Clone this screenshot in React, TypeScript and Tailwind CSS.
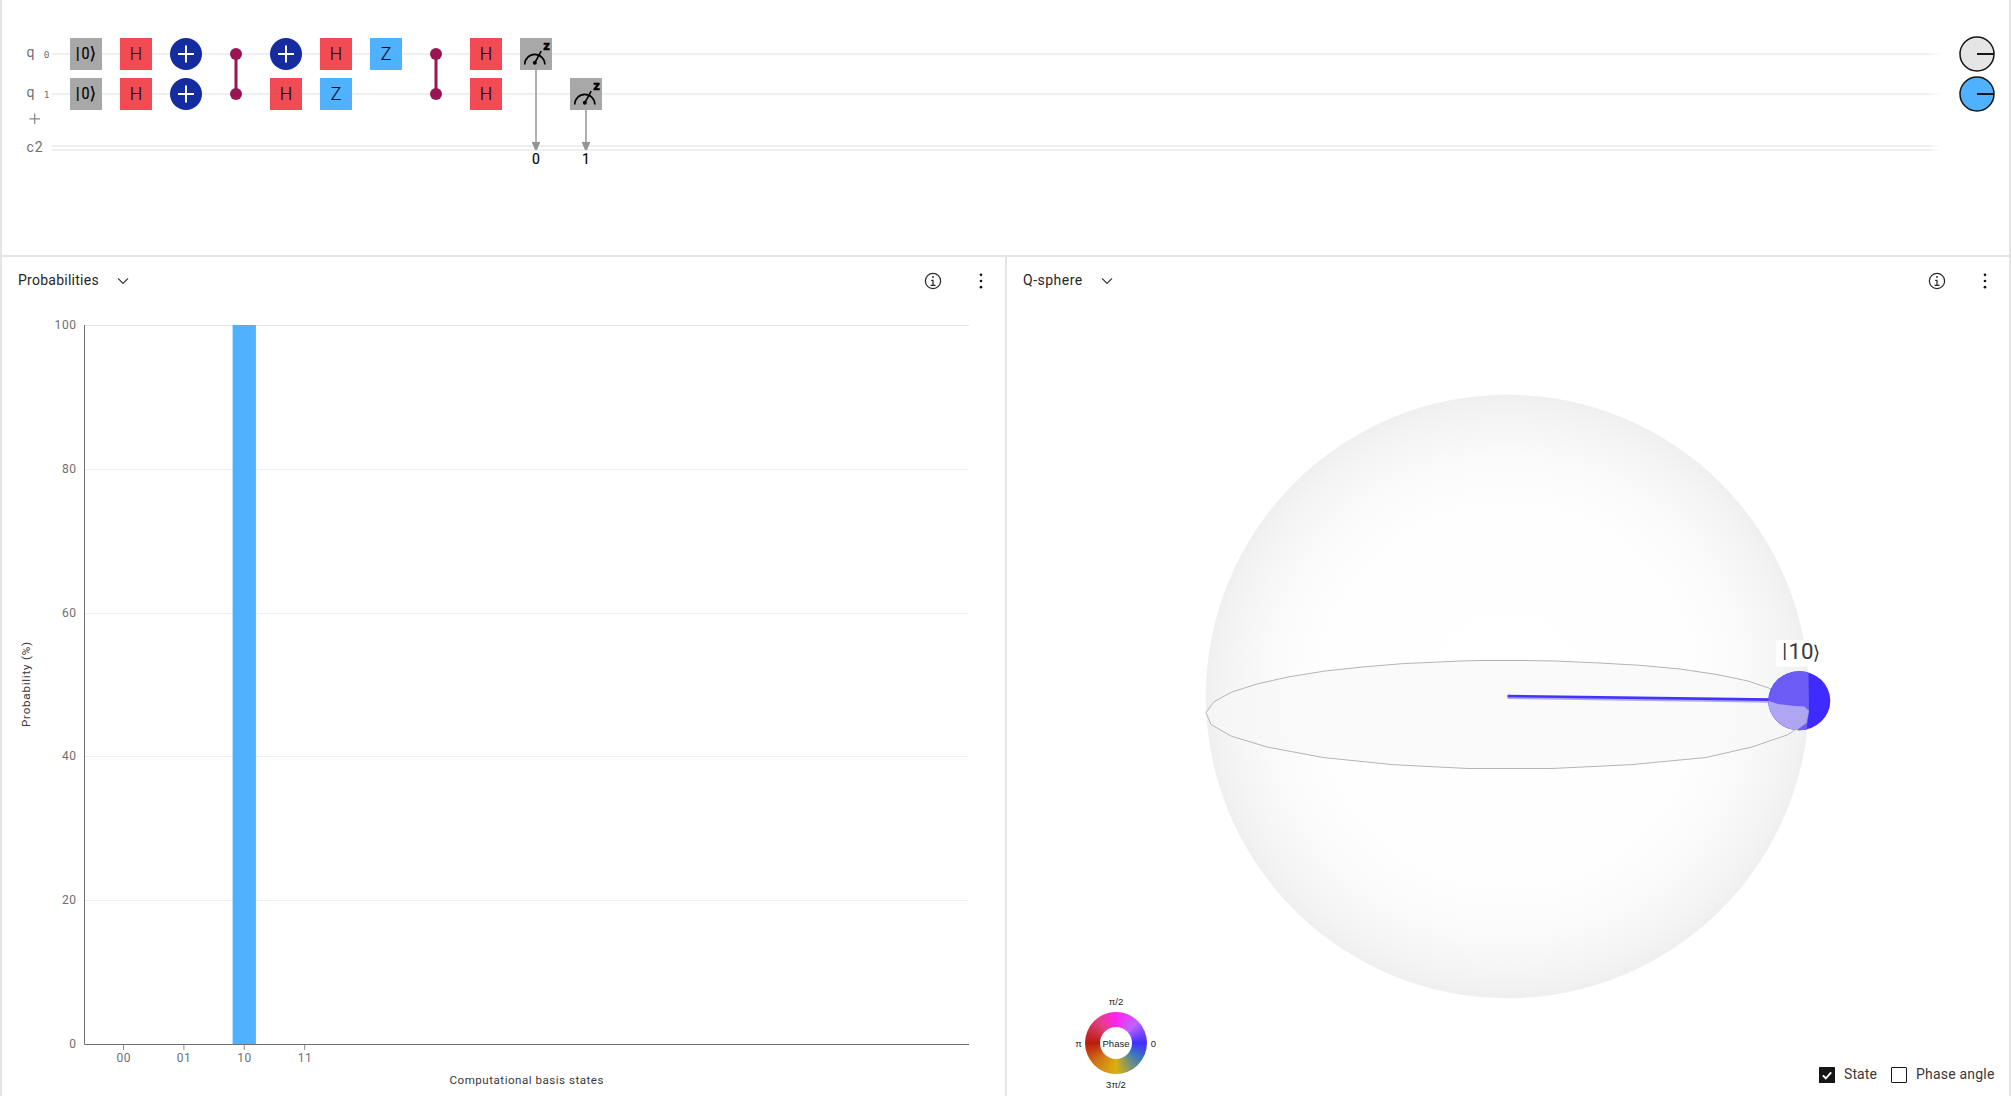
import React from "react";

const RED = "#f24b53";
const BLUE = "#4fb1ff";

type GateProps = { x: number; y: number };

function Letter({ x, y, fill, label, ink = "#0b0b1a" }: GateProps & { fill: string; label: string; ink?: string }) {
  return (
    <g>
      <rect x={x} y={y} width={32} height={32} fill={fill} />
      <text x={x + 16} y={y + 22.2} textAnchor="middle" fontSize={17.5} fontWeight={300} fill={ink} stroke={ink} strokeWidth={0.2}>
        {label}
      </text>
    </g>
  );
}

function Ket({ x, y }: GateProps) {
  return (
    <g>
      <rect x={x} y={y} width={32} height={32} fill="#a8a8a8" />
      <g fontSize={16} fill="#000" stroke="#000" strokeWidth={0.2}>
        <text x={x + 5.8} y={y + 20.5}>|</text>
        <text x={x + 11.6} y={y + 21} fontSize={16.5} textLength={8} lengthAdjust="spacingAndGlyphs">0</text>
        <text x={x + 19.6} y={y + 20.8} fontFamily="DejaVu Sans" fontSize={17}>⟩</text>
      </g>
    </g>
  );
}

function Not({ x, y }: GateProps) {
  return (
    <g>
      <circle cx={x + 16} cy={y + 16} r={16} fill="#142c9f" />
      <path d={`M${x + 8} ${y + 16}h16M${x + 16} ${y + 7.5}v17`} stroke="#fff" strokeWidth={2} />
    </g>
  );
}

function ControlPair({ x }: { x: number }) {
  return (
    <g fill="#991653">
      <rect x={x - 1.5} y={54} width={3} height={40} />
      <circle cx={x} cy={54} r={6} />
      <circle cx={x} cy={94} r={6} />
    </g>
  );
}

function Measure({ x, y, bit }: GateProps & { bit: string }) {
  const cx = x + 16;
  return (
    <g>
      <rect x={x} y={y} width={32} height={32} fill="#a8a8a8" />
      <path d={`M${x + 4.7} ${y + 26.5}a10.1 10.1 0 0 1 20.2 0`} fill="none" stroke="#000" strokeWidth={1.6} />
      <path d={`M${x + 14.8} ${y + 24.8}L${x + 21.2} ${y + 13.2}`} stroke="#000" strokeWidth={1.6} />
      <circle cx={x + 14.8} cy={y + 24.8} r={2} fill="#000" />
      <text x={x + 23.2} y={y + 12} fontSize={13} fontWeight={900} fill="#000" stroke="#000" strokeWidth={0.3}>z</text>
      <rect x={cx - 1} y={y + 32} width={2} height={110 - y} fill="#b0b0b0" />
      <path d={`M${cx - 4.3} 142h8.6l-3.3 8h-2z`} fill="#949494" />
      <text x={cx} y={164} textAnchor="middle" fontSize={14} fill="#000" stroke="#000" strokeWidth={0.15}>{bit}</text>
    </g>
  );
}

function Circuit() {
  return (
    <svg className="block h-[255px] w-[2007px] font-['Roboto']" viewBox="2 0 2007 255">
      <defs>
        <linearGradient id="wire" gradientUnits="userSpaceOnUse" x1={52} x2={1942} y1={0} y2={0}>
          <stop offset="0.992" stopColor="#efefef" />
          <stop offset="1" stopColor="#ffffff" />
        </linearGradient>
      </defs>
      {[53, 93, 145, 149].map((y) => (
        <rect key={y} x={52} y={y} width={1890} height={2} fill="url(#wire)" />
      ))}
      <g fill="#6f6f6f">
        <text x={26.5} y={57} fontSize={14}>q</text>
        <text x={26.5} y={97} fontSize={14}>q</text>
        <g fontFamily="DejaVu Sans Mono" fontSize={9.5}>
          <text x={43.8} y={57.8}>0</text>
          <text x={43.8} y={97.8}>1</text>
        </g>
        <text x={26.5} y={152} fontSize={14} textLength={16}>c2</text>
      </g>
      <path d="M29.5 118.8h10.5M34.7 113.5v10.5" stroke="#858585" strokeWidth={1.2} />
      <Ket x={70} y={38} />
      <Ket x={70} y={78} />
      <Letter x={120} y={38} fill={RED} label="H" ink="#4d0a12" />
      <Letter x={120} y={78} fill={RED} label="H" />
      <Not x={170} y={38} />
      <Not x={170} y={78} />
      <ControlPair x={236} />
      <Not x={270} y={38} />
      <Letter x={270} y={78} fill={RED} label="H" />
      <Letter x={320} y={38} fill={RED} label="H" ink="#35060f" />
      <Letter x={320} y={78} fill={BLUE} label="Z" />
      <Letter x={370} y={38} fill={BLUE} label="Z" />
      <ControlPair x={436} />
      <Letter x={470} y={38} fill={RED} label="H" />
      <Letter x={470} y={78} fill={RED} label="H" />
      <Measure x={520} y={38} bit="0" />
      <Measure x={570} y={78} bit="1" />
      {[
        { y: 54, fill: "#e5e5e5" },
        { y: 94, fill: BLUE },
      ].map(({ y, fill }) => (
        <g key={y}>
          <circle cx={1977} cy={y} r={17} fill={fill} stroke="#161616" strokeWidth={1.5} />
          <rect x={1977} y={y - 1} width={17} height={2} fill="#161616" />
        </g>
      ))}
    </svg>
  );
}

function PanelHeader({ title, className }: { title: string; className: string }) {
  return (
    <header className="flex h-12 items-center pl-4 pr-[14px]">
      <h2 className={`${className} -mt-px whitespace-nowrap text-[14px] text-[#262626]`}>{title}</h2>
      <svg className="h-4 w-4" viewBox="0 0 16 16">
        <path d="M3 5.4l5 5 5-5" fill="none" stroke="#393939" strokeWidth={1.3} />
      </svg>
      <svg className="ml-auto h-5 w-5" viewBox="0 0 32 32" fill="#2a2a2a">
        <path d="M17 22v-8h-4v2h2v6h-3v2h8v-2zM16 8a1.5 1.5 0 1 0 1.5 1.5A1.5 1.5 0 0 0 16 8z" />
        <circle cx={16} cy={16} r={12.2} fill="none" stroke="#2a2a2a" strokeWidth={2} />
      </svg>
      <svg className="ml-[28px] h-5 w-5" viewBox="0 0 20 20" fill="#161616">
        <circle cx={10} cy={3.8} r={1.35} />
        <circle cx={10} cy={10} r={1.35} />
        <circle cx={10} cy={16.2} r={1.35} />
      </svg>
    </header>
  );
}

function ProbabilityChart() {
  return (
    <svg className="block h-[791px] w-[1003px] font-['Roboto']" viewBox="2 305 1003 791">
      {[325, 469, 613, 756, 900].map((y, i) => (
        <g key={y}>
          <rect x={85} y={y} width={884} height={1} fill={i === 0 ? "#e4e4e4" : "#f0f0f0"} />
          <text x={76.8} y={y + 4.2} textAnchor="end" fontSize={12} letterSpacing={0.7} fill="#6f6f6f">
            {100 - i * 20}
          </text>
        </g>
      ))}
      <text x={76.8} y={1048.2} textAnchor="end" fontSize={12} letterSpacing={0.7} fill="#6f6f6f">0</text>
      <rect x={232.6} y={325} width={23.3} height={719} fill={BLUE} />
      <path d="M84.5 325v719.5H969" fill="none" stroke="#6f6f6f" strokeWidth={1} />
      {["00", "01", "10", "11"].map((s, i) => (
        <g key={s}>
          <rect x={123 + i * 60.4} y={1045} width={1} height={5} fill="#8d8d8d" />
          <text x={123.7 + i * 60.4} y={1062.2} textAnchor="middle" fontSize={12} letterSpacing={0.5} fill="#6f6f6f">
            {s}
          </text>
        </g>
      ))}
      <text x={449.5} y={1084} fontSize={11.6} textLength={154} fill="#393939">Computational basis states</text>
      <text x={0} y={0} transform="translate(30 727) rotate(-90)" fontSize={11.6} textLength={85} fill="#393939">
        Probability (%)
      </text>
    </svg>
  );
}

const EQUATOR =
  "M1206 712.7L1211 724.5L1231 736L1267 747L1323 757.5L1393 764.7L1468 768.5H1552L1631 764.7L1706 757.5L1752 747L1787 735L1806 723L1808.5 711L1804 703L1788 692L1771 688.8L1748 681L1717 674.5L1680 669L1640 665.3L1600 663L1555 661L1525 660.5H1480L1460 661L1402 663.7L1362 667L1325 671L1288 677L1257 684L1232 692L1214 701.7Z";

function QSphere() {
  return (
    <svg className="block h-[791px] w-[1002px] font-['Roboto']" viewBox="1007 305 1002 791">
      <defs>
        <radialGradient id="shell">
          <stop offset="0" stopColor="#ffffff" />
          <stop offset="0.62" stopColor="#fefefe" />
          <stop offset="0.8" stopColor="#fafafa" />
          <stop offset="0.93" stopColor="#f4f4f4" />
          <stop offset="1" stopColor="#efefef" />
        </radialGradient>
        <clipPath id="ball">
          <ellipse cx={1799.3} cy={700.7} rx={31} ry={29.5} />
        </clipPath>
      </defs>
      <circle cx={1507.5} cy={696.5} r={301.7} fill="url(#shell)" />
      <path d={EQUATOR} fill="#f7f7f7" fillOpacity={0.65} />
      <path d={EQUATOR} fill="none" stroke="#b4b4b4" strokeWidth={1} />
      <path d="M1507.5 697.8L1772 701.4" stroke="#b0a8f8" strokeWidth={2.6} />
      <path d="M1507.5 696L1772 699.6" stroke="#4433fa" strokeWidth={2.6} />
      <g clipPath="url(#ball)">
        <rect x={1767} y={670} width={65} height={62} fill="#3f2bff" />
        <path d="M1767 670H1808.5L1809 711L1806.5 732H1767z" fill="#6a5cf5" />
        <path d="M1767 700.5L1778 704L1795 706L1804 706.5L1808.5 711L1806 723L1796 731H1767z" fill="#afa6f3" />
        <path d="M1804 706.5L1808.5 711L1806 723L1787 735" fill="none" stroke="#aaa5c8" strokeWidth={1} />
      </g>
      <rect x={1776} y={640} width={48} height={26.5} fill="#fff" />
      <g fontSize={20} fill="#393939">
        <text x={1782.3} y={658}>|</text>
        <text x={1788.5} y={659.3} textLength={25} lengthAdjust="spacingAndGlyphs" fontSize={21.5}>10</text>
        <text x={1812.8} y={659} fontFamily="DejaVu Sans" fontSize={19}>⟩</text>
      </g>
    </svg>
  );
}

function PhaseWheel() {
  return (
    <div className="absolute bottom-[4px] left-[65px] grid w-[88px] grid-cols-[13px_62px_13px] items-center justify-items-center font-['Liberation_Sans'] text-[9.5px] leading-[15px] text-[#222]">
      <span className="col-span-3 mb-[3px]">π/2</span>
      <span>π</span>
      <div className="flex h-[62px] w-[62px] items-center justify-center rounded-full bg-[conic-gradient(#ff22ee,#c062ff_12.5%,#402eff_25%,#3f7fb4_35%,#dcb010_50%,#d27718_62.5%,#b81c0c_75%,#e23f80_89%,#ff22ee)]">
        <div className="flex h-8 w-8 items-center justify-center rounded-full bg-white">Phase</div>
      </div>
      <span>0</span>
      <span className="col-span-3 mt-[3px]">3π/2</span>
    </div>
  );
}

function Option({ label, checked, className }: { label: string; checked: boolean; className: string }) {
  return (
    <label className={`flex items-center whitespace-nowrap text-[14px] text-[#393939] ${className}`}>
      <svg className="mr-[9px] h-4 w-4 shrink-0" viewBox="0 0 16 16">
        {checked ? (
          <>
            <rect width={16} height={16} rx={0.5} fill="#161616" />
            <path d="M3.8 8.4l3 2.9 5.4-5.9" fill="none" stroke="#fff" strokeWidth={1.9} />
          </>
        ) : (
          <rect x={0.5} y={0.5} width={15} height={15} rx={0.5} fill="#fff" stroke="#161616" />
        )}
      </svg>
      {label}
    </label>
  );
}

export default function App() {
  return (
    <div className="flex h-[1096px] w-[2011px] flex-col overflow-hidden border-x-2 border-[#e4e4e4] bg-white font-['Roboto',sans-serif]">
      <section className="h-[257px] shrink-0 border-b-2 border-[#e4e4e4]">
        <Circuit />
      </section>
      <main className="flex flex-1">
        <section className="w-[1005px] border-r-2 border-[#e4e4e4]">
          <PanelHeader title="Probabilities" className="w-[97px] tracking-[0.25px]" />
          <ProbabilityChart />
        </section>
        <section className="relative flex-1">
          <PanelHeader title="Q-sphere" className="w-[76px] tracking-[0.5px]" />
          <QSphere />
          <PhaseWheel />
          <div className="absolute bottom-[11px] left-[812px] flex">
            <Option label="State" checked className="w-[72px] tracking-[0.1px]" />
            <Option label="Phase angle" checked={false} className="tracking-[0.2px]" />
          </div>
        </section>
      </main>
    </div>
  );
}
